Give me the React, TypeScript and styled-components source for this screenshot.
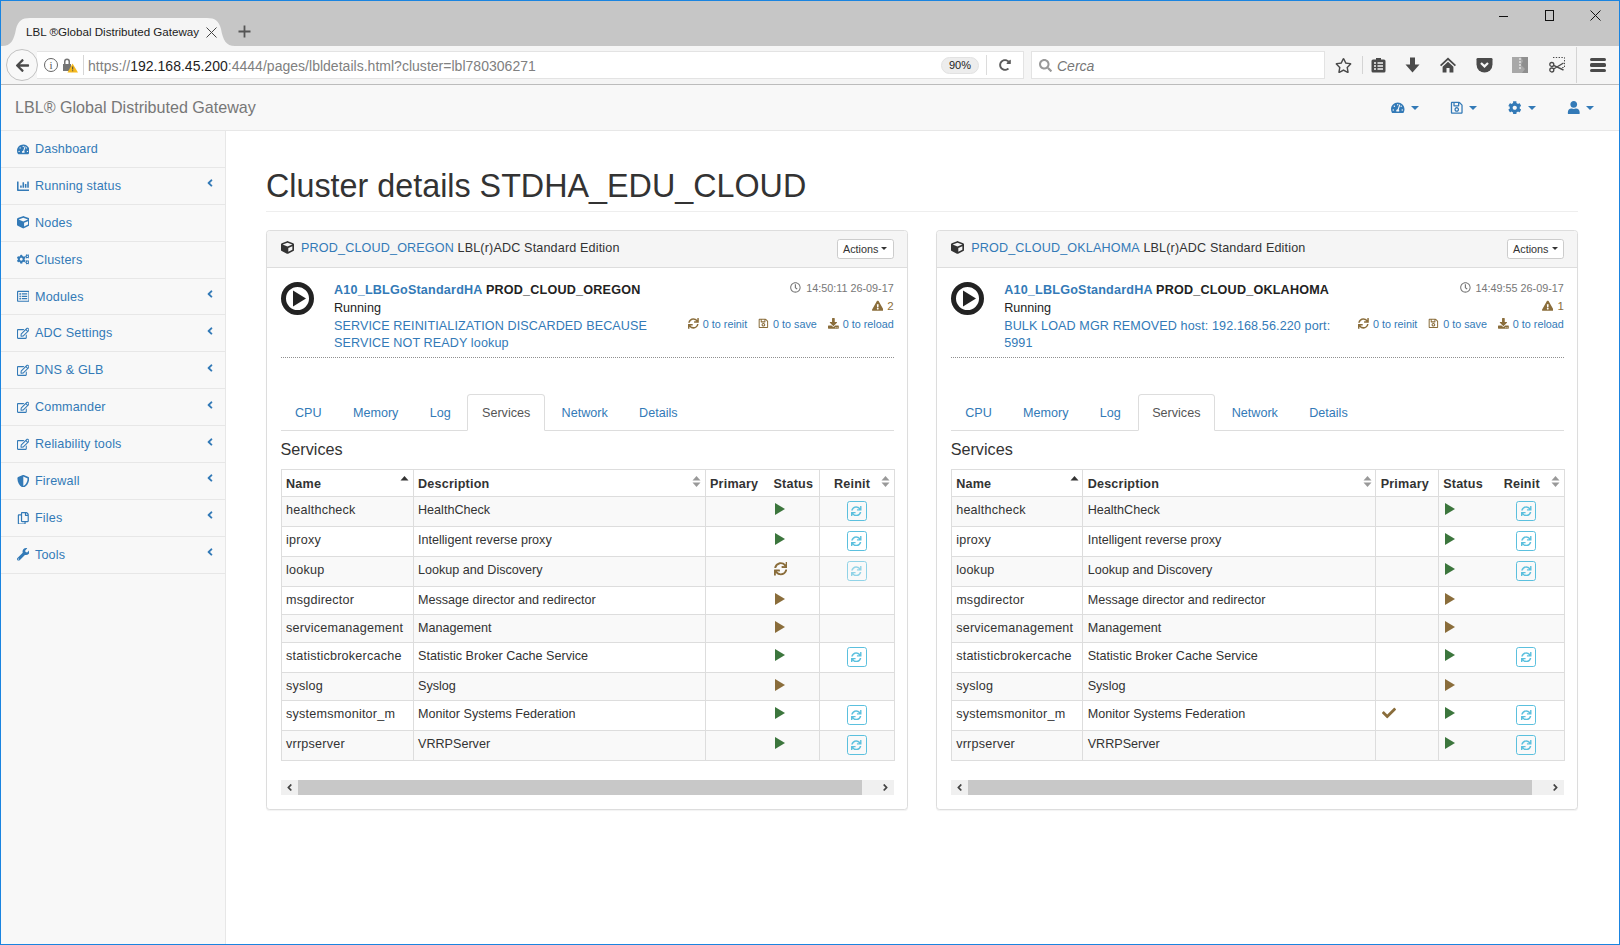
import React from 'react';
import styled, { createGlobalStyle } from 'styled-components';
import {
  FaArrowLeft,
  FaAngleLeft,
  FaAngleRight,
  FaCheck,
  FaCog,
  FaCogs,
  FaCube,
  FaDownload,
  FaExclamationTriangle,
  FaRegClock,
  FaRegCopy,
  FaRegEdit,
  FaRegListAlt,
  FaRegSave,
  FaRegStar,
  FaSearch,
  FaShieldAlt,
  FaSync,
  FaTachometerAlt,
  FaUser,
  FaWrench,
  FaChartBar,
  FaRedoAlt,
} from 'react-icons/fa';

const GlobalStyle = createGlobalStyle`
  html, body {
    margin: 0;
    padding: 0;
    background: #fff;
  }
  * {
    box-sizing: border-box;
  }
  body {
    font-family: "Liberation Sans", Arial, sans-serif;
    font-size: 12.6px;
    line-height: 18px;
    color: #333;
  }
  a {
    color: #337ab7;
    text-decoration: none;
  }
`;

const Window = styled.div`
  width: 1620px;
  height: 945px;
  border: 1px solid #1a84e0;
  display: flex;
  flex-direction: column;
  overflow: hidden;
`;

const TitleBar = styled.div`
  height: 45px;
  flex: none;
  background: #c6c6c6;
  display: flex;
  align-items: flex-end;
  padding-left: 1px;
`;

const BrowserTab = styled.div`
  position: relative;
  width: 233px;
  height: 28px;
  padding-left: 24px;
  display: flex;
  align-items: center;
  font-size: 11.6px;
  color: #222;
`;

const TabShape = styled.svg`
  position: absolute;
  left: 0;
  top: 0;
  width: 233px;
  height: 28px;
`;

const TabTitle = styled.span`
  position: relative;
  width: 180px;
  white-space: nowrap;
`;

const TabClose = styled.svg`
  position: relative;
  width: 11px;
  height: 11px;
`;

const NewTab = styled.svg`
  width: 13px;
  height: 13px;
  margin: 0 0 8px 3px;
`;

const WindowControls = styled.div`
  margin-left: auto;
  height: 100%;
  display: flex;
  align-items: flex-start;
  padding: 9px 18px 0 0;
  gap: 35px;
`;

const ControlIcon = styled.svg`
  width: 11px;
  height: 11px;
`;

const Toolbar = styled.div`
  height: 39px;
  flex: none;
  background: #f5f5f5;
  border-bottom: 1px solid #bcbcbc;
  display: flex;
  align-items: center;
  padding-left: 5px;
`;

const BackButton = styled.div`
  position: relative;
  z-index: 1;
  width: 32px;
  height: 32px;
  border-radius: 50%;
  border: 1px solid #c2c2c2;
  background: #f8f8f8;
  display: flex;
  align-items: center;
  justify-content: center;
  color: #4a4a4a;
  font-size: 15px;
`;

const UrlBox = styled.div`
  width: 987px;
  height: 28px;
  margin-left: -1px;
  background: #fff;
  border: 1px solid #e3e3e3;
  border-left: 0;
  display: flex;
  align-items: center;
  padding-left: 7px;
`;

const InfoIcon = styled.span`
  width: 14px;
  height: 14px;
  border: 1px solid #666;
  border-radius: 50%;
  font-family: "Liberation Serif", serif;
  font-size: 11px;
  line-height: 12px;
  text-align: center;
  color: #555;
  flex: none;
`;

const LockIcon = styled.svg`
  width: 16px;
  height: 16px;
  margin-left: 4px;
  flex: none;
`;

const UrlDivider = styled.span`
  width: 1px;
  height: 20px;
  background: #d6d6d6;
  margin: 0 4px 0 5px;
  flex: none;
`;

const UrlText = styled.span`
  padding-top: 1px;
  font-size: 14px;
  letter-spacing: 0.02px;
  color: #808080;
  white-space: nowrap;
`;

const UrlHost = styled.span`
  color: #1e1e1e;
`;

const ZoomPill = styled.span`
  margin-left: auto;
  width: 38px;
  height: 17px;
  border-radius: 9px;
  background: #ededed;
  border: 1px solid #e2e2e2;
  font-size: 11px;
  line-height: 15px;
  text-align: center;
  color: #222;
`;

const ReloadSlot = styled.span`
  width: 37px;
  height: 20px;
  margin-left: 7px;
  border-left: 1px solid #dcdcdc;
  display: flex;
  align-items: center;
  justify-content: center;
  color: #5b5b5b;
  font-size: 12px;
`;

const SearchBox = styled.div`
  width: 294px;
  height: 28px;
  margin-left: 7px;
  background: #fff;
  border: 1px solid #e3e3e3;
  display: flex;
  align-items: center;
  gap: 5px;
  padding-left: 7px;
  color: #999;
  font-size: 13px;
`;

const SearchText = styled.span`
  padding-top: 1px;
  font-style: italic;
  font-size: 14px;
  color: #777;
`;

const ToolSlot = styled.div<{ $w?: number }>`
  width: ${(p) => p.$w ?? 36}px;
  height: 20px;
  display: flex;
  align-items: center;
  justify-content: center;
  color: #4a4a4a;
  font-size: 17px;
  flex: none;
`;

const ToolDivider = styled.span<{ $tall?: boolean }>`
  width: 1px;
  height: ${(p) => (p.$tall ? 36 : 18)}px;
  background: #d4d4d4;
  flex: none;
`;

const Hamburger = styled.div`
  width: 16px;
  display: flex;
  flex-direction: column;
  gap: 2.5px;
`;

const HamburgerBar = styled.span`
  height: 3.2px;
  border-radius: 1.5px;
  background: #4a4a4a;
`;

const Navbar = styled.div`
  height: 46px;
  flex: none;
  background: #f8f8f8;
  border-bottom: 1px solid #e7e7e7;
  display: flex;
  align-items: center;
  padding: 0 8px 0 14px;
`;

const Brand = styled.a`
  font-size: 16.1px;
  margin-top: -1px;
  color: #777;
`;

const NavLinks = styled.div`
  margin-left: auto;
  display: flex;
`;

const NavLink = styled.a`
  width: 58.5px;
  padding-left: 14px;
  display: flex;
  align-items: center;
  gap: 6px;
  font-size: 13.5px;
  color: #337ab7;
`;

const Caret = styled.span<{ $dark?: boolean }>`
  width: 0;
  height: 0;
  border-top: ${(p) => (p.$dark ? '3.6px' : '4px')} solid ${(p) => (p.$dark ? '#333' : '#337ab7')};
  border-left: ${(p) => (p.$dark ? '3.6px' : '4px')} solid transparent;
  border-right: ${(p) => (p.$dark ? '3.6px' : '4px')} solid transparent;
`;

const Content = styled.div`
  flex: 1;
  display: flex;
  min-height: 0;
`;

const Sidebar = styled.nav`
  width: 225px;
  flex: none;
  background: #f8f8f8;
  border-right: 1px solid #e7e7e7;
`;

const SideItem = styled.a`
  height: 36.9px;
  padding: 9px 13px 9px 14px;
  border-bottom: 1px solid #e7e7e7;
  display: flex;
  align-items: center;
  letter-spacing: 0.15px;
  color: #337ab7;
`;

const SideIcon = styled.span`
  width: 16px;
  margin-right: 4px;
  display: flex;
  justify-content: center;
  font-size: 12.6px;
`;

const SideChevron = styled.span`
  margin-left: auto;
  margin-right: -4px;
  margin-top: -5px;
  display: flex;
  font-size: 12px;
`;

const Main = styled.main`
  flex: 1;
  min-width: 0;
  padding: 0 40.7px 0 40px;
`;

const PageHeader = styled.h1`
  margin: 36px 0 18px;
  padding: 2px 0 6px;
  border-bottom: 1px solid #eee;
  font-size: 32.3px;
  font-weight: 400;
  line-height: 35.6px;
  color: #333;
`;

const Panels = styled.div`
  display: grid;
  grid-template-columns: minmax(0, 1fr) minmax(0, 1fr);
  gap: 28px;
`;

const Panel = styled.section`
  background: #fff;
  border: 1px solid #ddd;
  border-radius: 3.6px;
  box-shadow: 0 1px 1px rgba(0, 0, 0, 0.05);
`;

const PanelHead = styled.header`
  height: 37px;
  padding: 8px 13.5px 0;
  background: #f5f5f5;
  border-bottom: 1px solid #ddd;
  border-radius: 3.6px 3.6px 0 0;
  display: flex;
  justify-content: space-between;
`;

const PanelTitle = styled.div`
  display: flex;
  align-items: center;
  height: 18px;
  letter-spacing: 0.15px;
  white-space: nowrap;
`;

const TitleCube = styled.span`
  display: flex;
  color: #333;
  margin-right: 7.5px;
  font-size: 13px;
`;

const TitleLink = styled.a`
  margin-right: 3.5px;
`;

const ActionsButton = styled.button`
  width: 57px;
  height: 20px;
  padding: 0;
  background: #fff;
  border: 1px solid #ccc;
  border-radius: 2.7px;
  font-family: inherit;
  font-size: 10.8px;
  color: #333;
  display: flex;
  align-items: center;
  justify-content: center;
  gap: 3px;
`;

const PanelBody = styled.div`
  padding: 14.5px 13.5px 14px;
`;

const Summary = styled.div`
  display: flex;
  height: 76px;
  border-bottom: 1px dotted #8f8f8f;
`;

const PlayRing = styled.svg`
  width: 33px;
  height: 33px;
  margin: 0 20.5px 0 0;
  flex: none;
`;

const SummaryText = styled.div`
  width: 350px;
  margin-top: -1px;
`;

const NodeName = styled.div`
  font-weight: 700;
  letter-spacing: 0.2px;
  color: #222;
  white-space: nowrap;
`;

const NodeLink = styled.a`
  color: #337ab7;
`;

const NodeState = styled.div`
  color: #222;
  line-height: 18.5px;
`;

const NodeMessage = styled.a`
  display: block;
  line-height: 17.3px;
  letter-spacing: 0.1px;
`;

const SummaryStats = styled.div`
  margin-left: auto;
  margin-top: -3.5px;
  display: flex;
  flex-direction: column;
  align-items: flex-end;
  font-size: 10.8px;
  line-height: 18px;
  white-space: nowrap;
`;

const TimeLine = styled.div`
  display: flex;
  align-items: center;
  gap: 5px;
  color: #777;
`;

const WarnLine = styled.div`
  display: flex;
  align-items: center;
  gap: 4px;
  color: #8a6d3b;
  font-size: 11.5px;
`;

const CounterLine = styled.div`
  display: flex;
  gap: 11px;
`;

const Counter = styled.a`
  display: flex;
  align-items: center;
  gap: 4px;
`;

const CounterIcon = styled.span`
  display: flex;
  color: #8a6d3b;
`;

const TabRow = styled.ul`
  list-style: none;
  margin: 36px 0 0;
  padding: 0;
  display: flex;
  gap: 2.3px;
  border-bottom: 1px solid #ddd;
`;

const TabItem = styled.li<{ $active?: boolean }>`
  height: 37px;
  margin-bottom: -1px;
  padding: 9px 13.5px;
  border: 1px solid ${(p) => (p.$active ? '#ddd' : 'transparent')};
  border-bottom-color: ${(p) => (p.$active ? '#fff' : 'transparent')};
  border-radius: 3.6px 3.6px 0 0;
  background: ${(p) => (p.$active ? '#fff' : 'transparent')};
  color: ${(p) => (p.$active ? '#555' : '#337ab7')};
`;

const SectionTitle = styled.h4`
  margin: 9px 0 10.5px;
  font-size: 16.2px;
  font-weight: 400;
  line-height: 18px;
  color: #333;
`;

const Table = styled.table`
  width: 100%;
  table-layout: fixed;
  border-collapse: collapse;
  border: 1px solid #ddd;
`;

const HeadCell = styled.th<{ $noRight?: boolean; $noLeft?: boolean }>`
  padding: 5px 4.5px 3px;
  text-align: left;
  font-weight: 700;
  letter-spacing: 0.2px;
  color: #333;
  white-space: nowrap;
  border: 1px solid #ddd;
  ${(p) => (p.$noRight ? 'border-right: 0;' : '')}
  ${(p) => (p.$noLeft ? 'border-left: 0;' : '')}
`;

const HeadInner = styled.div<{ $indent?: boolean }>`
  display: flex;
  align-items: center;
  justify-content: space-between;
  padding-left: ${(p) => (p.$indent ? '10px' : '0')};
`;

const SortMark = styled.svg`
  width: 9px;
  height: 13px;
  margin-top: -5px;
  margin-right: -1px;
  flex: none;
`;

const Row = styled.tr<{ $odd: boolean }>`
  background: ${(p) => (p.$odd ? '#f9f9f9' : '#fff')};
`;

const Cell = styled.td<{ $noRight?: boolean; $noLeft?: boolean; $wide?: boolean }>`
  padding: 4.5px;
  vertical-align: top;
  color: #333;
  white-space: nowrap;
  border: 1px solid #ddd;
  ${(p) => (p.$wide ? 'letter-spacing: 0.22px;' : '')}
  ${(p) => (p.$noRight ? 'border-right: 0;' : '')}
  ${(p) => (p.$noLeft ? 'border-left: 0;' : '')}
`;

const StatusMark = styled.span<{ $tone: 'ok' | 'warn' }>`
  display: block;
  width: 0;
  height: 0;
  margin: 2px 0 0 1.5px;
  border-left: 10px solid ${(p) => (p.$tone === 'ok' ? '#3c763d' : '#8a6d3b')};
  border-top: 6px solid transparent;
  border-bottom: 6px solid transparent;
`;

const SpinMark = styled.span`
  display: flex;
  padding-top: 1px;
  color: #8a6d3b;
  font-size: 13.5px;
`;

const PrimaryMark = styled.span`
  display: flex;
  padding: 1px 0 0 1px;
  color: #8a6d3b;
  font-size: 14px;
`;

const ReinitButton = styled.button<{ $disabled?: boolean }>`
  display: flex;
  align-items: center;
  justify-content: center;
  width: 20px;
  height: 20px;
  margin: 0 auto;
  padding: 0;
  background: transparent;
  border: 1px solid #5bc0de;
  border-radius: 2.7px;
  color: #5bc0de;
  font-size: 10.5px;
  opacity: ${(p) => (p.$disabled ? 0.65 : 1)};
`;

const ScrollBar = styled.div`
  margin-top: 19px;
  height: 15px;
  background: #f0f0f0;
  display: flex;
  align-items: center;
`;

const ScrollArrow = styled.span`
  width: 17px;
  flex: none;
  display: flex;
  justify-content: center;
  color: #444;
  font-size: 11px;
`;

const ScrollThumb = styled.span`
  width: 92.1%;
  height: 100%;
  background: #c8c8c8;
`;

const ScrollEnd = styled.span`
  margin-left: auto;
`;

type ServiceRow = {
  name: string;
  description: string;
  status: 'ok' | 'warn' | 'spin';
  reinit: 'on' | 'off' | 'none';
  primary?: boolean;
};

const services: ServiceRow[] = [
  { name: 'healthcheck', description: 'HealthCheck', status: 'ok', reinit: 'on' },
  { name: 'iproxy', description: 'Intelligent reverse proxy', status: 'ok', reinit: 'on' },
  { name: 'lookup', description: 'Lookup and Discovery', status: 'spin', reinit: 'off' },
  { name: 'msgdirector', description: 'Message director and redirector', status: 'warn', reinit: 'none' },
  { name: 'servicemanagement', description: 'Management', status: 'warn', reinit: 'none' },
  { name: 'statisticbrokercache', description: 'Statistic Broker Cache Service', status: 'ok', reinit: 'on' },
  { name: 'syslog', description: 'Syslog', status: 'warn', reinit: 'none' },
  { name: 'systemsmonitor_m', description: 'Monitor Systems Federation', status: 'ok', reinit: 'on' },
  { name: 'vrrpserver', description: 'VRRPServer', status: 'ok', reinit: 'on' },
];

const oklahomaServices: ServiceRow[] = services.map((s) => {
  if (s.name === 'lookup') return { ...s, status: 'ok', reinit: 'on' };
  if (s.name === 'systemsmonitor_m') return { ...s, primary: true };
  return s;
});

const sideItems = [
  { label: 'Dashboard', icon: <FaTachometerAlt /> },
  { label: 'Running status', icon: <FaChartBar />, more: true },
  { label: 'Nodes', icon: <FaCube /> },
  { label: 'Clusters', icon: <FaCogs /> },
  { label: 'Modules', icon: <FaRegListAlt />, more: true },
  { label: 'ADC Settings', icon: <FaRegEdit />, more: true },
  { label: 'DNS & GLB', icon: <FaRegEdit />, more: true },
  { label: 'Commander', icon: <FaRegEdit />, more: true },
  { label: 'Reliability tools', icon: <FaRegEdit />, more: true },
  { label: 'Firewall', icon: <FaShieldAlt />, more: true },
  { label: 'Files', icon: <FaRegCopy />, more: true },
  { label: 'Tools', icon: <FaWrench />, more: true },
];

const tabs = ['CPU', 'Memory', 'Log', 'Services', 'Network', 'Details'];

const SortIcon = ({ active }: { active?: boolean }) => (
  <SortMark viewBox="0 0 9 13">
    <path d="M4.5 1 L8.5 5.5 H0.5 Z" fill={active ? '#333' : '#999'} />
    {!active && <path d="M4.5 12 L8.5 7.5 H0.5 Z" fill="#999" />}
  </SortMark>
);

const ServicesTable = ({ rows, widths, seam }: { rows: ServiceRow[]; widths: number[]; seam: number }) => {
  const edges = (col: number) => ({ $noRight: col === seam, $noLeft: col === seam + 1 });

  return (
    <Table>
      <colgroup>
        {widths.map((w, i) => (
          <col key={i} width={w} />
        ))}
      </colgroup>
      <thead>
        <tr>
          <HeadCell {...edges(0)}>
            <HeadInner>
              Name
              <SortIcon active />
            </HeadInner>
          </HeadCell>
          <HeadCell {...edges(1)}>
            <HeadInner>
              Description
              <SortIcon />
            </HeadInner>
          </HeadCell>
          <HeadCell {...edges(2)}>Primary</HeadCell>
          <HeadCell {...edges(3)}>Status</HeadCell>
          <HeadCell {...edges(4)}>
            <HeadInner $indent>
              Reinit
              <SortIcon />
            </HeadInner>
          </HeadCell>
        </tr>
      </thead>
      <tbody>
        {rows.map((row, i) => (
          <Row key={row.name} $odd={i % 2 === 0}>
            <Cell {...edges(0)} $wide>
              {row.name}
            </Cell>
            <Cell {...edges(1)}>{row.description}</Cell>
            <Cell {...edges(2)}>
              {row.primary && (
                <PrimaryMark>
                  <FaCheck />
                </PrimaryMark>
              )}
            </Cell>
            <Cell {...edges(3)}>
              {row.status === 'spin' ? (
                <SpinMark>
                  <FaSync />
                </SpinMark>
              ) : (
                <StatusMark $tone={row.status} />
              )}
            </Cell>
            <Cell {...edges(4)}>
              {row.reinit !== 'none' && (
                <ReinitButton $disabled={row.reinit === 'off'}>
                  <FaSync />
                </ReinitButton>
              )}
            </Cell>
          </Row>
        ))}
      </tbody>
    </Table>
  );
};

type ClusterNode = {
  name: string;
  time: string;
  warnings: number;
  message: string;
  rows: ServiceRow[];
  widths: number[];
  seam: number;
};

const NodePanel = ({ node }: { node: ClusterNode }) => (
  <Panel>
    <PanelHead>
      <PanelTitle>
        <TitleCube>
          <FaCube />
        </TitleCube>
        <TitleLink href="#">{node.name}</TitleLink>
        LBL(r)ADC Standard Edition
      </PanelTitle>
      <ActionsButton>
        Actions <Caret $dark />
      </ActionsButton>
    </PanelHead>
    <PanelBody>
      <Summary>
        <PlayRing viewBox="0 0 33 33">
          <circle cx="16.5" cy="16.5" r="14" fill="none" stroke="#222" strokeWidth="5" />
          <path d="M12 8.5 L25 16.5 L12 24.5 Z" fill="#222" />
        </PlayRing>
        <SummaryText>
          <NodeName>
            <NodeLink href="#">A10_LBLGoStandardHA</NodeLink> {node.name}
          </NodeName>
          <NodeState>Running</NodeState>
          <NodeMessage href="#">{node.message}</NodeMessage>
        </SummaryText>
        <SummaryStats>
          <TimeLine>
            <FaRegClock />
            {node.time}
          </TimeLine>
          <WarnLine>
            <FaExclamationTriangle />
            {node.warnings}
          </WarnLine>
          <CounterLine>
            <Counter href="#">
              <CounterIcon>
                <FaSync />
              </CounterIcon>
              0 to reinit
            </Counter>
            <Counter href="#">
              <CounterIcon>
                <FaRegSave />
              </CounterIcon>
              0 to save
            </Counter>
            <Counter href="#">
              <CounterIcon>
                <FaDownload />
              </CounterIcon>
              0 to reload
            </Counter>
          </CounterLine>
        </SummaryStats>
      </Summary>
      <TabRow>
        {tabs.map((tab) => (
          <TabItem key={tab} $active={tab === 'Services'}>
            {tab}
          </TabItem>
        ))}
      </TabRow>
      <SectionTitle>Services</SectionTitle>
      <ServicesTable rows={node.rows} widths={node.widths} seam={node.seam} />
      <ScrollBar>
        <ScrollArrow>
          <FaAngleLeft />
        </ScrollArrow>
        <ScrollThumb />
        <ScrollEnd />
        <ScrollArrow>
          <FaAngleRight />
        </ScrollArrow>
      </ScrollBar>
    </PanelBody>
  </Panel>
);

const nodes: ClusterNode[] = [
  {
    name: 'PROD_CLOUD_OREGON',
    time: '14:50:11 26-09-17',
    warnings: 2,
    message: 'SERVICE REINITIALIZATION DISCARDED BECAUSE SERVICE NOT READY lookup',
    rows: services,
    widths: [132, 292, 64, 50, 75],
    seam: 2,
  },
  {
    name: 'PROD_CLOUD_OKLAHOMA',
    time: '14:49:55 26-09-17',
    warnings: 1,
    message: 'BULK LOAD MGR REMOVED host: 192.168.56.220 port: 5991',
    rows: oklahomaServices,
    widths: [131.5, 293, 62.5, 51, 75],
    seam: 3,
  },
];

const App = () => (
  <>
    <GlobalStyle />
    <Window>
      <TitleBar>
        <BrowserTab>
          <TabShape viewBox="0 0 233 28" preserveAspectRatio="none">
            <path
              d="M0 28 C9 28 12 22 14 11 C16 3 20 0 28 0 L205 0 C213 0 217 3 219 11 C221 22 224 28 233 28 Z"
              fill="#f5f5f5"
            />
          </TabShape>
          <TabTitle>LBL ®Global Distributed Gateway</TabTitle>
          <TabClose viewBox="0 0 11 11">
            <path d="M0.5 0.5 L10.5 10.5 M10.5 0.5 L0.5 10.5" stroke="#444" strokeWidth="1" />
          </TabClose>
        </BrowserTab>
        <NewTab viewBox="0 0 13 13">
          <path d="M6.5 0.5 V12.5 M0.5 6.5 H12.5" stroke="#555" strokeWidth="1.8" />
        </NewTab>
        <WindowControls>
          <ControlIcon viewBox="0 0 11 11">
            <path d="M1 6.5 H10" stroke="#111" strokeWidth="1" />
          </ControlIcon>
          <ControlIcon viewBox="0 0 11 11">
            <rect x="1.5" y="0.5" width="8" height="10" fill="none" stroke="#111" strokeWidth="1" />
          </ControlIcon>
          <ControlIcon viewBox="0 0 11 11">
            <path d="M0.5 0.5 L10.5 10.5 M10.5 0.5 L0.5 10.5" stroke="#111" strokeWidth="1" />
          </ControlIcon>
        </WindowControls>
      </TitleBar>
      <Toolbar>
        <BackButton>
          <FaArrowLeft />
        </BackButton>
        <UrlBox>
          <InfoIcon>i</InfoIcon>
          <LockIcon viewBox="0 0 16 16">
            <path d="M2 7 V4.5 a3 3 0 0 1 6 0 V7 h1 v7 H1 V7 Z M3.5 7 h3 V4.5 a1.5 1.5 0 0 0-3 0 Z" fill="#757575" />
            <path d="M10.5 6.5 L16 15.5 H5.5 Z" fill="#f5b91e" />
            <path d="M10.2 9.5 h1 v3 h-1 Z M10.2 13.2 h1 v1 h-1 Z" fill="#444" />
          </LockIcon>
          <UrlDivider />
          <UrlText>
            https://<UrlHost>192.168.45.200</UrlHost>:4444/pages/lbldetails.html?cluster=lbl780306271
          </UrlText>
          <ZoomPill>90%</ZoomPill>
          <ReloadSlot>
            <FaRedoAlt />
          </ReloadSlot>
        </UrlBox>
        <SearchBox>
          <FaSearch />
          <SearchText>Cerca</SearchText>
        </SearchBox>
        <ToolSlot $w={37}>
          <FaRegStar />
        </ToolSlot>
        <ToolDivider />
        <ToolSlot $w={31}>
          <svg width="15" height="16" viewBox="0 0 15 16">
            <path d="M2 2.5 H5 V1 H10 V2.5 H13 Q14.5 2.5 14.5 4 V14 Q14.5 15.5 13 15.5 H2 Q0.5 15.5 0.5 14 V4 Q0.5 2.5 2 2.5 Z" fill="#4a4a4a" />
            <path d="M3 6 H5 M6.5 6 H12 M3 9 H5 M6.5 9 H12 M3 12 H5 M6.5 12 H12" stroke="#f5f5f5" strokeWidth="1.4" />
          </svg>
        </ToolSlot>
        <ToolSlot>
          <svg width="15" height="16" viewBox="0 0 15 16">
            <path d="M5 0.5 H10 V7.5 H14.5 L7.5 15.5 L0.5 7.5 H5 Z" fill="#4a4a4a" />
          </svg>
        </ToolSlot>
        <ToolSlot>
          <svg width="16" height="16" viewBox="0 0 16 16" fill="#4a4a4a">
            <path d="M8 0.5 L0 8 L1.2 9.3 L8 3 L14.8 9.3 L16 8 Z" />
            <path d="M8 4.8 L2.6 9.8 V15.5 H6.5 V11 H9.5 V15.5 H13.4 V9.8 Z" />
          </svg>
        </ToolSlot>
        <ToolSlot>
          <svg width="17" height="16" viewBox="0 0 17 16">
            <path d="M1.8 1 H15.2 Q16.5 1 16.5 2.3 V7.5 A8 8 0 0 1 0.5 7.5 V2.3 Q0.5 1 1.8 1 Z" fill="#4a4a4a" />
            <path d="M5 6 L8.5 9.4 L12 6" fill="none" stroke="#f5f5f5" strokeWidth="2.2" />
          </svg>
        </ToolSlot>
        <ToolSlot>
          <svg width="16" height="16" viewBox="0 0 16 16">
            <rect x="0" y="0" width="16" height="16" fill="#a8a8a8" />
            <path d="M9 0 H16 V16 H10 L13 12 L9 8 L11 4 Z" fill="#8f8f8f" />
            <path d="M7 2 H9 M7 5 H9 M7 8 H9 M7 11 H9" stroke="#e2e2e2" strokeWidth="1.4" />
          </svg>
        </ToolSlot>
        <ToolSlot $w={38}>
          <svg width="16" height="16" viewBox="0 0 16 16" fill="none" stroke="#4a4a4a">
            <path d="M4 0.5 H15.5 V10.5 H12" strokeDasharray="1.4 1.4" />
            <circle cx="2.8" cy="7.5" r="2" strokeWidth="1.3" />
            <circle cx="2.8" cy="13" r="2" strokeWidth="1.3" />
            <path d="M4.6 8.4 L14.5 13 M4.6 12 L14.5 6" strokeWidth="1.4" />
          </svg>
        </ToolSlot>
        <ToolDivider $tall />
        <ToolSlot $w={42}>
          <Hamburger>
            <HamburgerBar />
            <HamburgerBar />
            <HamburgerBar />
          </Hamburger>
        </ToolSlot>
      </Toolbar>
      <Navbar>
        <Brand href="#">LBL® Global Distributed Gateway</Brand>
        <NavLinks>
          <NavLink href="#">
            <FaTachometerAlt />
            <Caret />
          </NavLink>
          <NavLink href="#">
            <FaRegSave />
            <Caret />
          </NavLink>
          <NavLink href="#">
            <FaCog />
            <Caret />
          </NavLink>
          <NavLink href="#">
            <FaUser />
            <Caret />
          </NavLink>
        </NavLinks>
      </Navbar>
      <Content>
        <Sidebar>
          {sideItems.map((item) => (
            <SideItem key={item.label} href="#">
              <SideIcon>{item.icon}</SideIcon>
              {item.label}
              {item.more && (
                <SideChevron>
                  <FaAngleLeft />
                </SideChevron>
              )}
            </SideItem>
          ))}
        </Sidebar>
        <Main>
          <PageHeader>Cluster details STDHA_EDU_CLOUD</PageHeader>
          <Panels>
            {nodes.map((node) => (
              <NodePanel key={node.name} node={node} />
            ))}
          </Panels>
        </Main>
      </Content>
    </Window>
  </>
);

export default App;
